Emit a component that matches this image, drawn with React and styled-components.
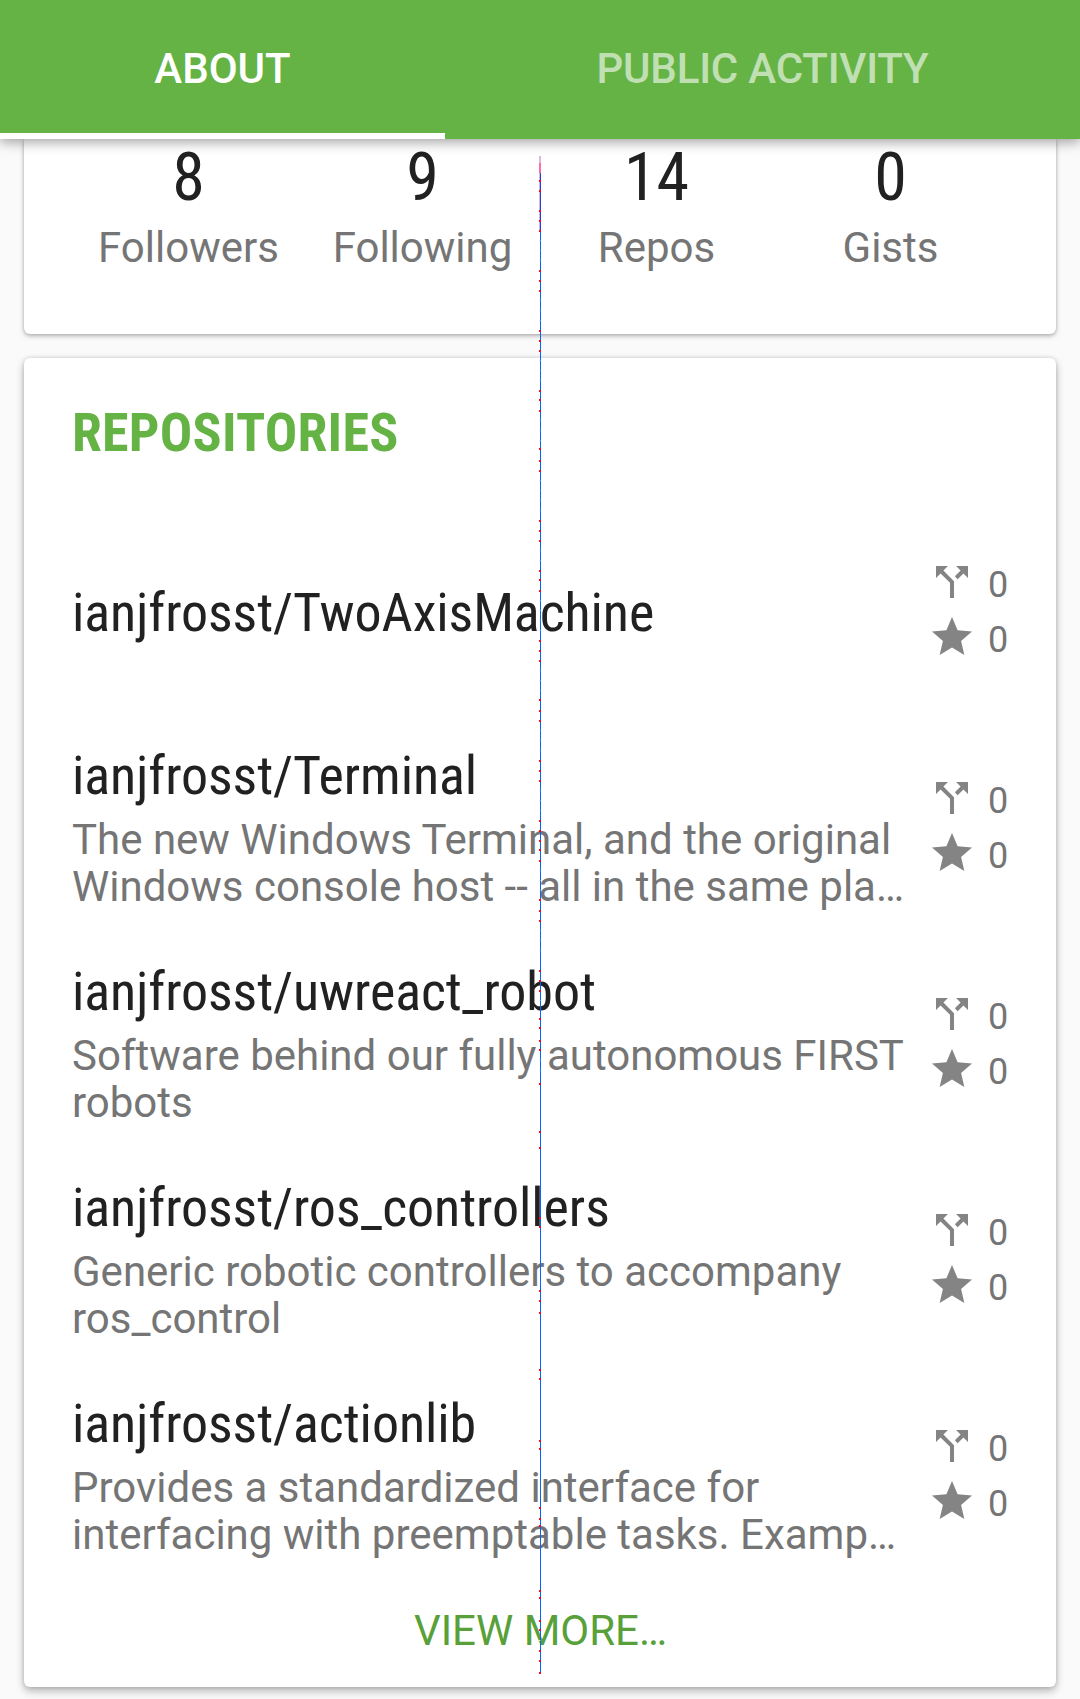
import React from 'react';
import styled, { createGlobalStyle } from 'styled-components';

const GlobalStyle = createGlobalStyle`
  * { box-sizing: border-box; }
  body {
    margin: 0;
    background: #fafafa;
    color: #757575;
    font-family: Roboto, "Noto Sans", sans-serif;
    overflow: hidden;
  }
`;

const Screen = styled.div`
  position: relative;
  width: 1080px;
  height: 1699px;
  display: flex;
  flex-direction: column;
  overflow: hidden;
`;

const TabBar = styled.nav`
  position: relative;
  z-index: 1;
  display: flex;
  flex: none;
  height: 139px;
  background: #65b345;
  box-shadow: 0 3px 12px rgba(0, 0, 0, 0.38);
`;

const Tab = styled.div`
  width: ${(p) => p.$width}px;
  padding-top: 44px;
  border-bottom: 6px solid ${(p) => (p.$active ? '#fff' : 'transparent')};
  color: ${(p) => (p.$active ? '#fff' : 'rgba(255, 255, 255, 0.6)')};
  font-size: 42px;
  font-weight: 500;
  letter-spacing: ${(p) => (p.$active ? '0' : '-0.2px')};
  line-height: 49px;
  text-align: center;
  white-space: nowrap;
`;

const Card = styled.section`
  flex: none;
  margin: 0 24px;
  padding: 0 48px;
  background: #fff;
  border-radius: 6px;
  box-shadow: 0 2px 5px rgba(0, 0, 0, 0.28), 0 0 3px rgba(0, 0, 0, 0.14);
`;

const StatsCard = styled(Card)`
  display: grid;
  grid-template-columns: repeat(4, 1fr);
  height: 195px;
  padding: 1px 48.5px 0 47.5px;
  border-radius: 0 0 6px 6px;
`;

const Stat = styled.div`
  display: flex;
  flex-direction: column;
  align-items: center;
  gap: 8px;
`;

const StatValue = styled.div`
  color: #212121;
  font-family: "Roboto Condensed", Roboto, sans-serif;
  font-size: 66px;
  line-height: 75px;
`;

const StatLabel = styled.div`
  font-size: 42px;
  line-height: 49px;
`;

const RepoCard = styled(Card)`
  display: flex;
  flex-direction: column;
  height: 1329px;
  margin-top: 24px;
  padding-top: 43px;
  box-shadow: 0 4px 8px rgba(0, 0, 0, 0.28), 0 0 4px rgba(0, 0, 0, 0.14);
`;

const Heading = styled.h2`
  margin: 0 0 40px;
  color: #65b345;
  font: bold 54px/63px "Roboto Condensed", Roboto, sans-serif;
  letter-spacing: 0.22px;
`;

const RepoRow = styled.article`
  display: flex;
  align-items: center;
  justify-content: space-between;
  height: 216px;
`;

const RepoText = styled.div`
  display: flex;
  flex-direction: column;
  gap: 9px;
  width: 840px;
  padding: ${(p) => (p.$single ? '1px 0 0' : '0 0 2px')};
`;

const RepoName = styled.h3`
  margin: 0;
  color: #212121;
  font: 400 54px/63px "Roboto Condensed", Roboto, sans-serif;
  letter-spacing: -0.08px;
`;

const Description = styled.p`
  margin: 0;
  font-size: 42px;
  line-height: 47px;
`;

const Counters = styled.div`
  display: flex;
  flex-direction: column;
  gap: 7px;
  width: 80px;
  padding-bottom: 5px;
`;

const Counter = styled.div`
  display: flex;
  align-items: flex-end;
  gap: 12px;
  height: 48px;
  font-size: 36px;
  line-height: 42px;
`;

const Icon = styled.svg`
  flex: none;
  width: 48px;
  height: 48px;
  fill: #848484;
`;

const MoreButton = styled.button`
  height: 103px;
  padding: 0 0 11px 1px;
  border: 0;
  background: none;
  color: #58a039;
  font: 400 42px/49px Roboto, sans-serif;
`;

const Seam = styled.svg`
  position: absolute;
  z-index: 2;
  top: 0;
  left: 539px;
  width: 2px;
  height: 1699px;
  pointer-events: none;
`;

const icons = {
  fork: 'M14 4l2.29 2.29-2.88 2.88 1.42 1.42 2.88-2.88L20 10V4zm-4 0H4v6l2.29-2.29 4.71 4.7V20h2v-8.41l-5.29-5.3z',
  star: 'M12 17.27L18.18 21l-1.64-7.03L22 9.24l-7.19-.61L12 2 9.19 8.63 2 9.24l5.46 4.73L5.82 21z',
};

const stats = [
  ['8', 'Followers'],
  ['9', 'Following'],
  ['14', 'Repos'],
  ['0', 'Gists'],
];

const repos = [
  { name: 'ianjfrosst/TwoAxisMachine' },
  {
    name: 'ianjfrosst/Terminal',
    about: 'The new Windows Terminal, and the original Windows console host -- all in the same pla…',
  },
  { name: 'ianjfrosst/uwreact_robot', about: 'Software behind our fully autonomous FIRST robots' },
  { name: 'ianjfrosst/ros_controllers', about: 'Generic robotic controllers to accompany ros_control' },
  {
    name: 'ianjfrosst/actionlib',
    about: 'Provides a standardized interface for interfacing with preemptable tasks. Examp…',
  },
];

const redMarks = [
  180, 190, 210, 220, 230, 270, 280, 290, 330, 340, 350, 390, 399, 410, 448, 460, 470, 520, 530, 540,
  570, 579, 590, 640, 650, 660, 699, 710, 720, 760, 770, 780, 820, 830, 840, 849, 860, 899, 910, 920,
  970, 980, 990, 1018, 1027, 1040, 1049, 1083, 1131, 1147, 1217, 1226, 1290, 1300, 1312, 1369, 1378,
  1440, 1448, 1507, 1518, 1525, 1590, 1597, 1620, 1629, 1650, 1660, 1672,
];

const cyanMarks = [
  240, 250, 260, 300, 310, 320, 360, 370, 380, 420, 430, 440, 480, 490, 500, 510, 550, 560, 600, 610,
  620, 630, 670, 680, 690, 730, 740, 750, 790, 800, 810, 870, 880, 890, 930, 940, 950, 1000, 1060,
  1070, 1640,
];

const CounterItem = ({ icon, value }) => (
  <Counter>
    <Icon viewBox="0 0 24 24" aria-hidden="true">
      <path d={icons[icon]} />
    </Icon>
    <span>{value}</span>
  </Counter>
);

export default function App() {
  return (
    <Screen>
      <GlobalStyle />
      <TabBar>
        <Tab $width={445} $active>ABOUT</Tab>
        <Tab $width={635}>PUBLIC ACTIVITY</Tab>
      </TabBar>
      <StatsCard>
        {stats.map(([value, label]) => (
          <Stat key={label}>
            <StatValue>{value}</StatValue>
            <StatLabel>{label}</StatLabel>
          </Stat>
        ))}
      </StatsCard>
      <RepoCard>
        <Heading>REPOSITORIES</Heading>
        {repos.map((repo) => (
          <RepoRow key={repo.name}>
            <RepoText $single={!repo.about}>
              <RepoName>{repo.name}</RepoName>
              {repo.about && <Description>{repo.about}</Description>}
            </RepoText>
            <Counters>
              <CounterItem icon="fork" value="0" />
              <CounterItem icon="star" value="0" />
            </Counters>
          </RepoRow>
        ))}
        <MoreButton>VIEW MORE…</MoreButton>
      </RepoCard>
      <Seam viewBox="0 0 2 1699" shapeRendering="crispEdges" aria-hidden="true">
        <rect x="0" y="156" width="2" height="7" fill="#dcb8e0" />
        <rect x="0" y="163" width="2" height="10" fill="#f76fa5" />
        <rect x="0" y="173" width="1" height="57" fill="#d3b5e2" />
        <rect x="1" y="173" width="1" height="57" fill="#2a3fd0" />
        <rect x="1" y="230" width="1" height="1443" fill="#0a62ff" />
        {cyanMarks.map((y) => (
          <React.Fragment key={y}>
            <rect x="0" y={y} width="1" height="1" fill="#c4f5f2" />
            <rect x="1" y={y} width="1" height="1" fill="#35a8f5" />
          </React.Fragment>
        ))}
        {redMarks.map((y) => (
          <rect key={y} x="0" y={y} width="2" height="2" fill="#f5081c" />
        ))}
      </Seam>
    </Screen>
  );
}
